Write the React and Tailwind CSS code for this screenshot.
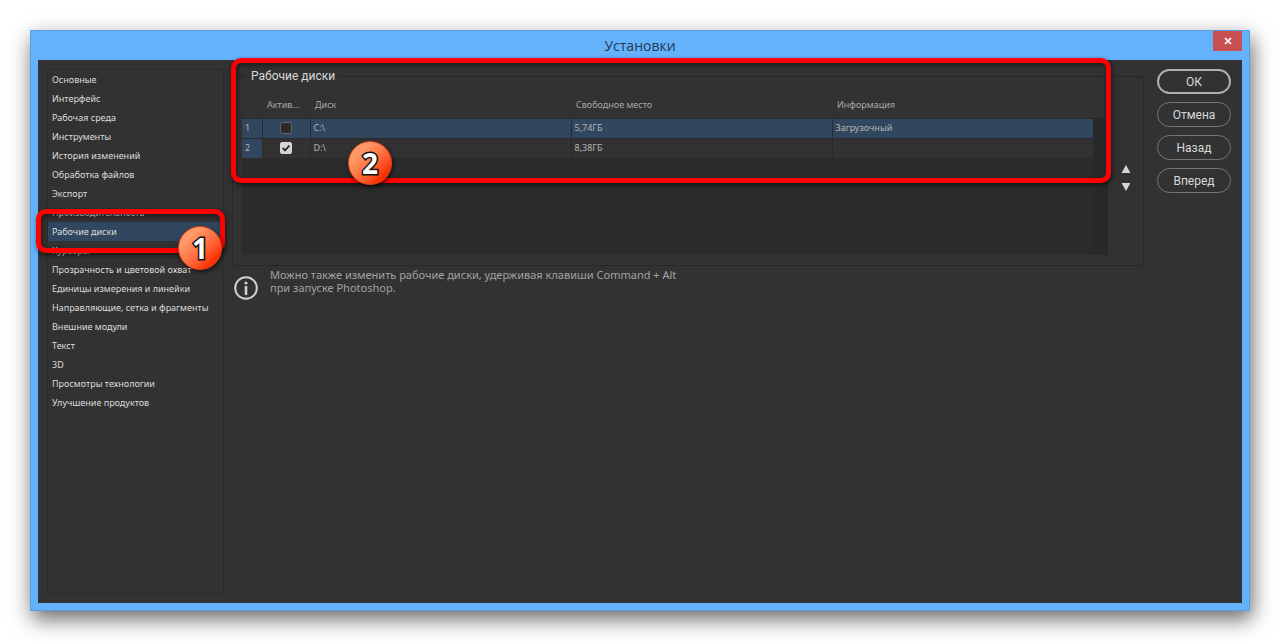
import { useState } from "react";

const sections = [
  "Основные",
  "Интерфейс",
  "Рабочая среда",
  "Инструменты",
  "История изменений",
  "Обработка файлов",
  "Экспорт",
  "Производительность",
  "Рабочие диски",
  "Курсоры",
  "Прозрачность и цветовой охват",
  "Единицы измерения и линейки",
  "Направляющие, сетка и фрагменты",
  "Внешние модули",
  "Текст",
  "3D",
  "Просмотры технологии",
  "Улучшение продуктов",
];

const initialDisks = [
  { name: "C:\\", free: "5,74ГБ", info: "Загрузочный", active: false },
  { name: "D:\\", free: "8,38ГБ", info: "", active: true },
];

const actions = ["ОК", "Отмена", "Назад", "Вперед"];

function Badge({ children, className }) {
  return (
    <span
      className={`pointer-events-none absolute z-20 flex size-11 items-center justify-center rounded-full border border-[#e0401a] bg-linear-135 from-[#ff9a68] from-25% via-[#ff6a3a] via-55% to-[#fb3200] to-80% font-['Open_Sans',sans-serif] text-[28px] leading-none font-bold text-white shadow-[1px_2px_4px_rgba(0,0,0,0.6)] [-webkit-text-stroke:3px_#111] [paint-order:stroke_fill] ${className}`}
    >
      {children}
    </span>
  );
}

function Frame({ className }) {
  return (
    <span
      className={`pointer-events-none absolute z-10 rounded-[10px] border-5 border-[#fe0000] shadow-[1px_2px_5px_rgba(0,0,0,0.6),inset_1px_2px_5px_rgba(0,0,0,0.5)] ${className}`}
    />
  );
}

function Sidebar({ current, onSelect }) {
  return (
    <nav className="w-[177px] shrink-0 border border-[#2a2a2a]">
      <ul>
        {sections.map((name) => (
          <li key={name} className="relative">
            <button
              type="button"
              onClick={() => onSelect(name)}
              className={`block h-[19px] w-full pl-1 text-left text-[9px] leading-[19px] whitespace-nowrap text-[#dcdcdc] ${
                name === current ? "bg-[#30475f]" : ""
              }`}
            >
              {name}
            </button>
            {name === "Рабочие диски" && (
              <>
                <Frame className="-top-[13px] -right-0.5 -bottom-3 -left-3" />
                <Badge className="top-1 right-px">1</Badge>
              </>
            )}
          </li>
        ))}
      </ul>
    </nav>
  );
}

function DiskCheckbox({ checked, onChange, label }) {
  return (
    <span className="relative mx-auto block size-3">
      <input
        type="checkbox"
        aria-label={label}
        checked={checked}
        onChange={onChange}
        className="block size-3 appearance-none rounded-xs border border-[#626262] bg-[#2b2b2b] checked:border-[#d6d6d6] checked:bg-[#d6d6d6]"
      />
      {checked && (
        <svg viewBox="0 0 12 12" className="pointer-events-none absolute inset-0 size-3">
          <path d="M2.6 5.8 5 8.4 9.4 3.6" fill="none" stroke="#2b2b2b" strokeWidth="1.8" />
        </svg>
      )}
    </span>
  );
}

function DiskTable() {
  const [disks, setDisks] = useState(initialDisks);

  const toggle = (index) => {
    setDisks(disks.map((d, i) => (i === index ? { ...d, active: !d.active } : d)));
  };

  return (
    <table className="w-full table-fixed border-collapse text-left text-[9px] text-[#b4b4b4]">
      <colgroup>
        <col className="w-5" />
        <col className="w-12" />
        <col />
        <col />
        <col />
      </colgroup>
      <thead>
        <tr className="h-[26px] leading-3 text-[#a8a8a8]">
          <th />
          <th className="pl-[5px] font-normal whitespace-nowrap">Актив...</th>
          <th className="pl-[5px] font-normal">Диск</th>
          <th className="pl-[5px] font-normal">Свободное место</th>
          <th className="pl-[5px] font-normal">Информация</th>
        </tr>
      </thead>
      <tbody>
        {disks.map((disk, i) => (
          <tr
            key={disk.name}
            className={`h-5 border-t border-[#292929] leading-3 ${i === 0 ? "bg-[#30475f]" : "bg-[#323232]"}`}
          >
            <td className="bg-[#30475f] pl-[3px]">{i + 1}</td>
            <td className="border-l border-[#292929]">
              <DiskCheckbox checked={disk.active} onChange={() => toggle(i)} label={`Диск ${disk.name}`} />
            </td>
            <td className="border-l border-[#292929] pl-[3px]">{disk.name}</td>
            <td className="border-l border-[#292929] pl-[3px]">{disk.free}</td>
            <td className="border-l border-[#292929] pl-[3px]">{disk.info}</td>
          </tr>
        ))}
      </tbody>
    </table>
  );
}

export default function App() {
  const [current, setCurrent] = useState("Рабочие диски");

  return (
    <div className="flex min-h-screen bg-white p-[30px] font-['Noto_Sans',sans-serif]">
      <div className="flex flex-1 flex-col border border-[#5a9ee0] bg-[#64b2fc] px-[7px] pb-[7px] shadow-[2px_8px_20px_rgba(0,0,0,0.6)]">
        <header className="relative flex h-[29px] items-center justify-center">
          <h1 className="font-['Open_Sans',sans-serif] text-[14px] text-[#26384c]">Установки</h1>
          <button
            type="button"
            aria-label="Закрыть"
            className="absolute top-0 right-0 flex h-5 w-[29px] items-center justify-center bg-[#c75050]"
          >
            <svg viewBox="0 0 8 8" className="size-2">
              <path d="M1 1 7 7M7 1 1 7" stroke="#fff" strokeWidth="1.7" />
            </svg>
          </button>
        </header>

        <div className="flex flex-1 bg-[#323232] py-[9px] pr-[11px] pl-[9px]">
          <Sidebar current={current} onSelect={setCurrent} />

          <main className="ml-2 min-w-0 flex-1">
            <div className="relative -mt-px">
              <fieldset className="border border-[#272727] pb-[10px] pl-[9px]">
                <legend className="ml-[5px] px-1 font-[Roboto,sans-serif] text-[12px] leading-4 text-[#d8d8d8]">
                  Рабочие диски
                </legend>
                <div className="flex pt-2">
                  <div className="flex min-h-[163px] flex-1 flex-col">
                    <DiskTable />
                    <div className="flex-1 bg-[#2b2b2b]" />
                  </div>
                  <div className="mt-[26px] w-[15px] bg-[#282a2a]" />
                  <div className="flex w-[35px] flex-col items-center justify-center gap-2 pt-2">
                    <button type="button" aria-label="Переместить вверх">
                      <svg viewBox="0 0 10 10" className="size-[10px]">
                        <path d="M5 1 9.4 9H.6z" fill="#d6d6d6" />
                      </svg>
                    </button>
                    <button type="button" aria-label="Переместить вниз">
                      <svg viewBox="0 0 10 10" className="size-[10px]">
                        <path d="M5 9 9.4 1H.6z" fill="#d6d6d6" />
                      </svg>
                    </button>
                  </div>
                </div>
              </fieldset>
              <Frame className="-top-2.5 right-[33px] bottom-[83px] -left-px" />
              <Badge className="top-[73px] left-[116px]">2</Badge>
            </div>

            <div className="mt-0.5 flex">
              <svg viewBox="0 0 24 24" className="mt-2 ml-0.5 size-6 shrink-0">
                <circle cx="12" cy="12" r="10.8" fill="none" stroke="#d0d0d0" strokeWidth="2" />
                <path d="M12 10v9" stroke="#d0d0d0" strokeWidth="2.6" />
                <circle cx="12" cy="7" r="1.6" fill="#d0d0d0" />
              </svg>
              <p className="ml-3 text-[11px] leading-[13px] text-[#a2a2a2]">
                Можно также изменить рабочие диски, удерживая клавиши Command + Alt
                <br />
                при запуске Photoshop.
              </p>
            </div>
          </main>

          <div className="ml-[13px] flex w-[74px] flex-col gap-2">
            {actions.map((label, i) => (
              <button
                key={label}
                type="button"
                className={`h-[25px] rounded-full font-[Roboto,sans-serif] text-[12px] leading-4 text-[#d8d8d8] ${
                  i === 0 ? "border-2 border-[#b0b0b0]" : "border border-[#757575]"
                }`}
              >
                {label}
              </button>
            ))}
          </div>
        </div>
      </div>
    </div>
  );
}
